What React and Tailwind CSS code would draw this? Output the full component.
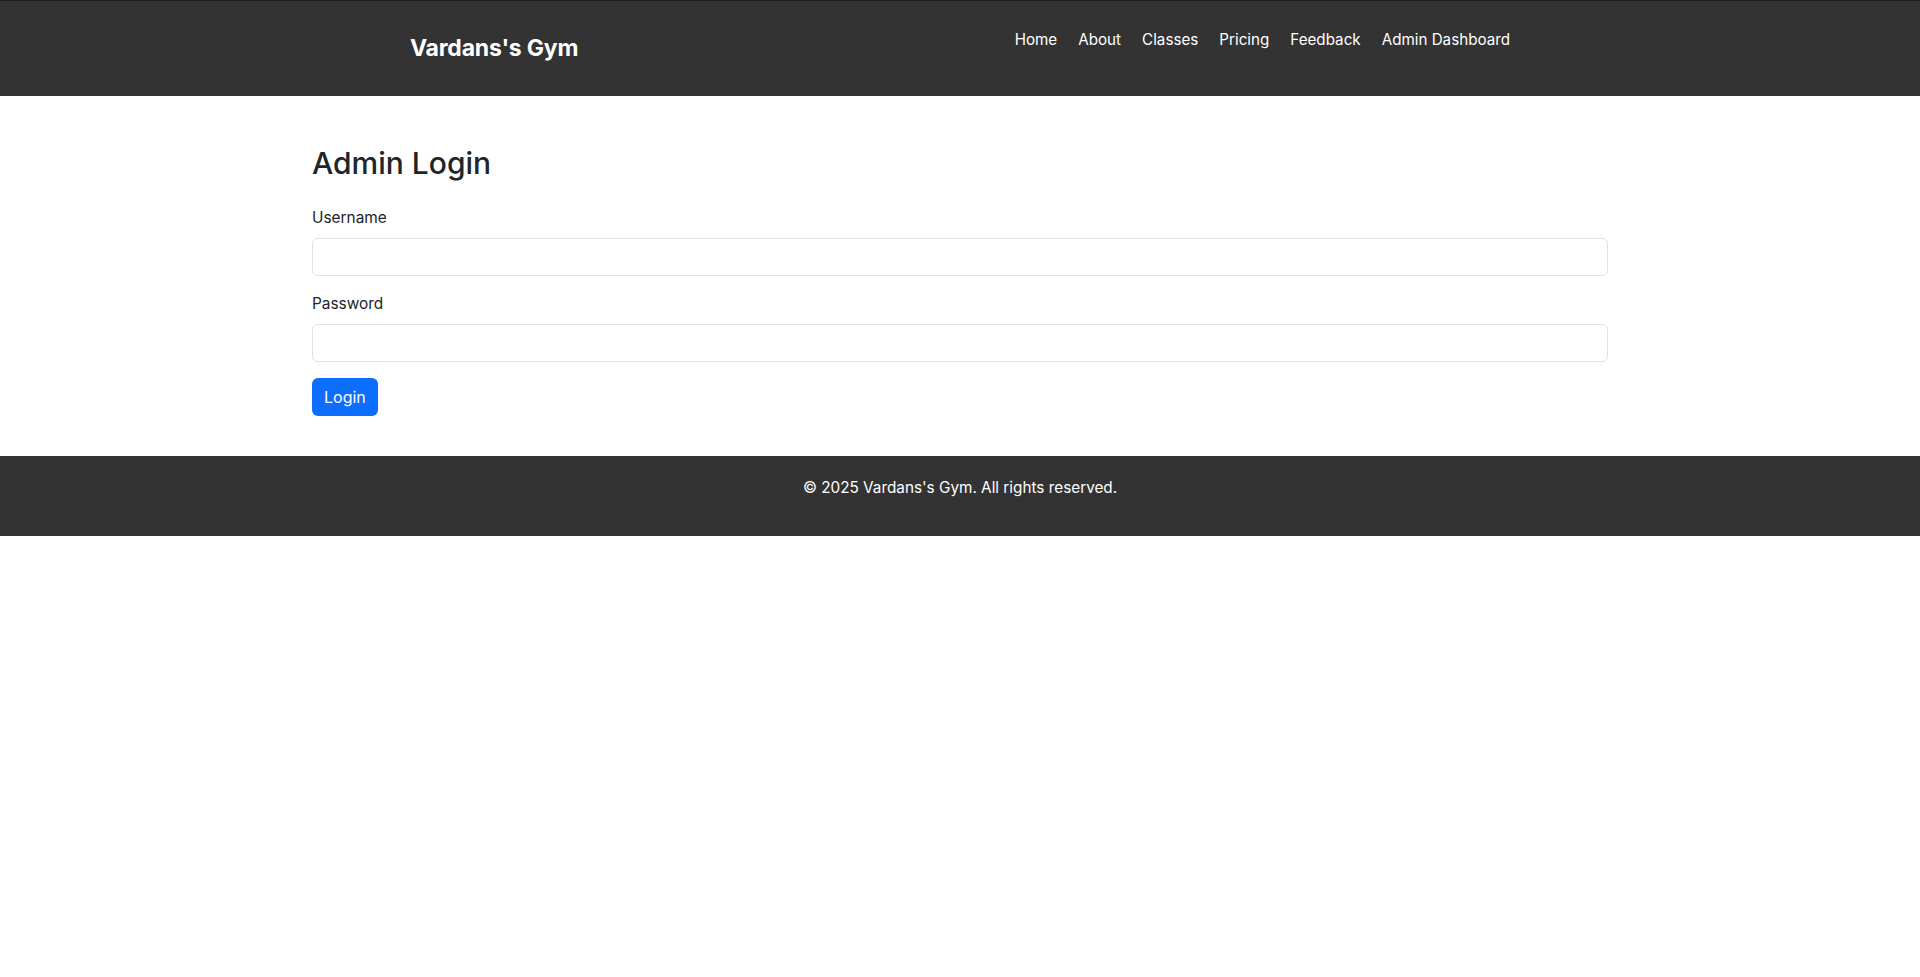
export default function App() {
  const links = ['Home', 'About', 'Classes', 'Pricing', 'Feedback', 'Admin Dashboard'];

  return (
    <div className="min-h-screen bg-white text-[#212529]" style={{ fontFamily: 'Inter, "Noto Sans", sans-serif' }}>
      <header className="h-24 bg-[#333333] border-t border-[#1c1c1c] text-white">
        <div className="w-[1100px] mx-auto h-full flex items-center justify-between">
          <h1 className="text-[23px] font-bold tracking-[-0.2px]">Vardans's Gym</h1>
          <ul className="flex gap-[21px] mb-4 text-[15.2px]">
            {links.map((l) => (
              <li key={l}>
                <a href="#" className="text-white">{l}</a>
              </li>
            ))}
          </ul>
        </div>
      </header>

      <main className="max-w-[1320px] mx-auto px-3 pt-12 pb-10">
        <h2 className="text-[30px] leading-[38px] font-medium mb-6">Admin Login</h2>
        <form onSubmit={(e) => e.preventDefault()}>
          <div className="mb-4">
            <label className="block mb-2 text-[15.4px] leading-6">Username</label>
            <input type="text" className="w-full h-[38px] px-3 border border-[#dee2e6] rounded-md outline-none" />
          </div>
          <div className="mb-4">
            <label className="block mb-2 text-[15.4px] leading-6">Password</label>
            <input type="password" className="w-full h-[38px] px-3 border border-[#dee2e6] rounded-md outline-none" />
          </div>
          <button type="submit" className="h-[38px] px-3 bg-[#0d6efd] text-white rounded-md text-base">
            Login
          </button>
        </form>
      </main>

      <footer className="h-20 bg-[#333333] text-white text-center pt-5">
        <p className="text-[15.3px] leading-6">© 2025 Vardans's Gym. All rights reserved.</p>
      </footer>
    </div>
  );
}
